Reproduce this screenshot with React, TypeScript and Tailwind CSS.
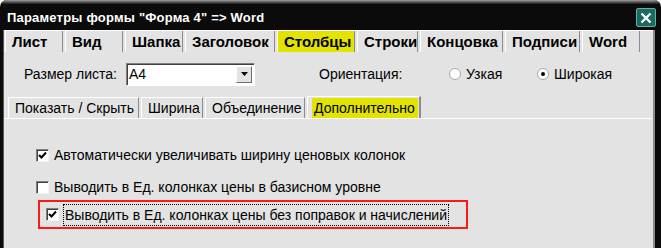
import React from 'react';

const topTabs = [
    { label: 'Лист', w: 58 },
    { label: 'Вид', w: 58 },
    { label: 'Шапка', w: 58 },
    { label: 'Заголовок', w: 90 },
    { label: 'Столбцы', w: 78, active: true },
    { label: 'Строки', w: 61 },
    { label: 'Концовка', w: 83 },
    { label: 'Подписи', w: 75 },
    { label: 'Word', w: 58 },
];

const innerTabs = [
    { label: 'Показать / Скрыть', w: 131 },
    { label: 'Ширина', w: 62 },
    { label: 'Объединение', w: 100 },
];

const CheckBox: React.FC<{ checked: boolean }> = ({ checked }) => (
    <div className="w-[13px] h-[13px] bg-white border border-t-[#808080] border-l-[#808080] border-b-[#f4f4f4] border-r-[#f4f4f4] shadow-[inset_1px_1px_0_#404040] flex items-center justify-center shrink-0">
        {checked && (
            <svg width="9" height="9" viewBox="0 0 9 9">
                <path d="M1 4 L3.5 6.5 L8 1.5" stroke="#000" strokeWidth="2" fill="none" />
            </svg>
        )}
    </div>
);

const Radio: React.FC<{ checked: boolean }> = ({ checked }) => (
    <div className="w-[12px] h-[12px] rounded-full bg-white border border-[#a8a8a8] flex items-center justify-center shrink-0">
        {checked && <div className="w-[4px] h-[4px] rounded-full bg-black" />}
    </div>
);

const App: React.FC = () => {
    return (
        <div className="w-[661px] h-[248px] bg-[#0b0b0b] rounded-t-[7px] overflow-hidden flex flex-col text-black" style={{ fontFamily: '"Liberation Sans", Arial, sans-serif' }}>
            <div className="h-[4px] bg-gradient-to-b from-[#a0a0a0] to-[#1a1a1a] shrink-0" />
            {/* Title bar */}
            <div className="h-[26px] flex items-center justify-between pl-[7px] pr-[5px] shrink-0">
                <span className="text-white font-bold text-[13px] tracking-[0.2px] leading-none">Параметры формы "Форма 4" =&gt; Word</span>
                <div className="w-[20px] h-[19px] bg-[#1b6a5f] border border-[#5fb3a6] rounded-[2px] flex items-center justify-center mt-[1px]">
                    <svg width="12" height="12" viewBox="0 0 12 12">
                        <path d="M1.5 1.5 L10.5 10.5 M10.5 1.5 L1.5 10.5" stroke="#fff" strokeWidth="2.4" />
                    </svg>
                </div>
            </div>

            <div className="flex-1 flex pl-[3px] pr-[6px]">
                <div className="flex-1 bg-[#e3e3e3] border-l border-[#5a5a5a] border-r-2 border-r-[#8a8a8a] flex flex-col">
                    {/* top tabs */}
                    <div className="h-[22px] flex gap-[2px] pl-[1px] border-t border-white">
                        {topTabs.map(t => (
                            <div
                                key={t.label}
                                style={{ width: t.w }}
                                className={`h-[21px] pl-[6px] flex items-center border-l border-white border-r border-r-[#8c8c8c] text-[15px] font-bold leading-none ${t.active ? 'bg-[#e3e300]' : ''}`}
                            >
                                {t.label}
                            </div>
                        ))}
                    </div>

                    {/* size / orientation row */}
                    <div className="h-[44px] flex items-center text-[14px]">
                        <span className="ml-[20px] w-[102px]">Размер листа:</span>
                        <div className="w-[129px] h-[23px] bg-white border border-t-[#808080] border-l-[#808080] border-b-white border-r-white shadow-[inset_1px_1px_0_#404040] flex items-center justify-between pl-[2px] pr-[2px]">
                            <span className="leading-none">A4</span>
                            <div className="w-[16px] h-[17px] bg-[#e3e3e3] border border-t-white border-l-white border-b-[#707070] border-r-[#707070] flex items-center justify-center">
                                <svg width="7" height="4" viewBox="0 0 7 4"><path d="M0 0 H7 L3.5 4 Z" fill="#000" /></svg>
                            </div>
                        </div>
                        <span className="ml-[64px] w-[130px]">Ориентация:</span>
                        <div className="flex items-center gap-[5px] w-[88px]">
                            <Radio checked={false} />
                            <span>Узкая</span>
                        </div>
                        <div className="flex items-center gap-[5px]">
                            <Radio checked={true} />
                            <span>Широкая</span>
                        </div>
                    </div>

                    {/* inner tabs */}
                    <div className="h-[22px] flex items-end gap-[2px] pl-[4px] text-[14px]">
                        {innerTabs.map(t => (
                            <div
                                key={t.label}
                                style={{ width: t.w }}
                                className="h-[21px] pl-[6px] flex items-center border-t border-l border-white border-r border-r-[#8c8c8c] leading-none"
                            >
                                {t.label}
                            </div>
                        ))}
                        <div className="w-[114px] h-[22px] pl-[4px] flex items-center border-t border-l border-white border-r-2 border-r-[#8c8c8c] relative z-10">
                            <div className="bg-[#e3e300] h-[20px] w-[106px] pl-[2px] flex items-center leading-none">Дополнительно</div>
                        </div>
                    </div>

                    {/* panel */}
                    <div className="flex-1 border-t border-white flex flex-col text-[14px] mr-[1px]">
                        <div className="pl-[32px] mt-[29px] flex items-center gap-[5px] h-[14px]">
                            <CheckBox checked={true} />
                            <span className="leading-none">Автоматически увеличивать ширину ценовых колонок</span>
                        </div>
                        <div className="pl-[32px] mt-[18px] flex items-center gap-[5px] h-[14px]">
                            <CheckBox checked={false} />
                            <span className="leading-none">Выводить в Ед. колонках цены в базисном уровне</span>
                        </div>
                        <div className="ml-[34px] mt-[6px] w-[430px] h-[29px] border-2 border-[#ff1818] flex items-center pl-[6px] gap-[4px]">
                            <CheckBox checked={true} />
                            <span className="leading-none border border-dotted border-black px-[1px] py-[3px]">Выводить в Ед. колонках цены без поправок и начислений</span>
                        </div>
                    </div>
                </div>
            </div>
        </div>
    );
};

export default App;
